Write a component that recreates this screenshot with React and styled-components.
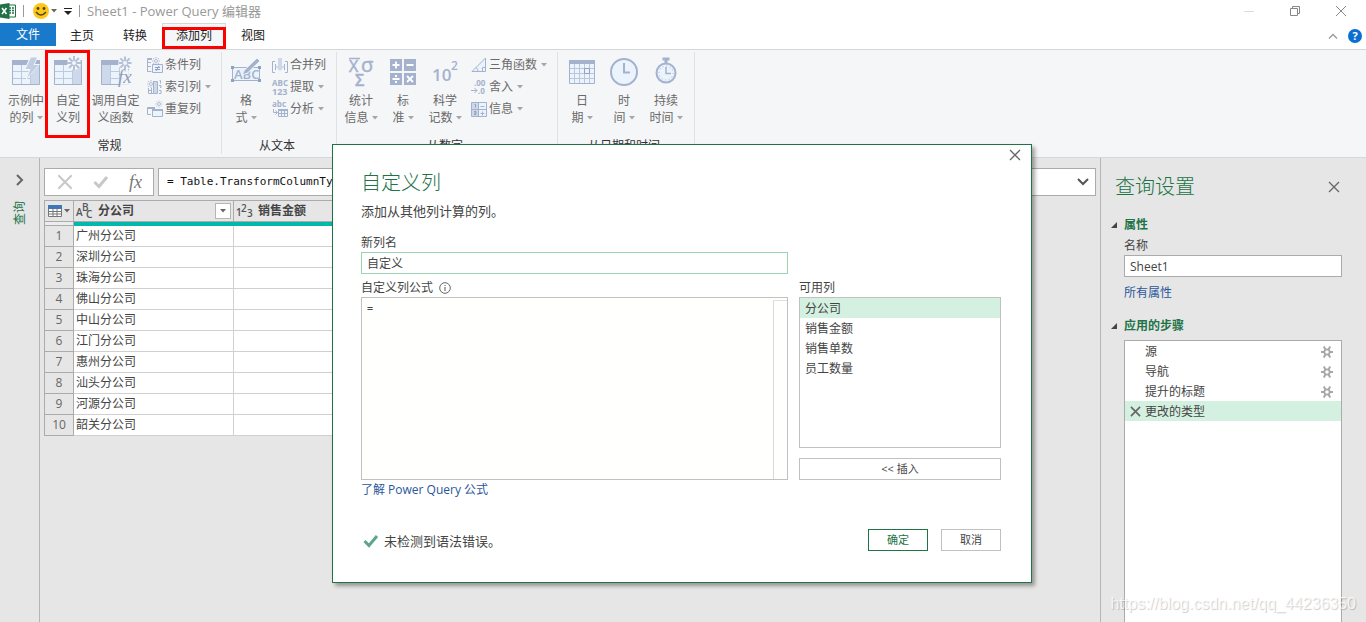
import React, { useState } from 'react';
import styled, { createGlobalStyle, css } from 'styled-components';


const columns = ['分公司', '销售金额', '销售单数', '员工数量'];
const shownColumns = columns.slice(0, 2);

const branches = [
    '广州分公司', '深圳分公司', '珠海分公司', '佛山分公司', '中山分公司',
    '江门分公司', '惠州分公司', '汕头分公司', '河源分公司', '韶关分公司',
];

const steps = [
    { name: '源', gear: true },
    { name: '导航', gear: true },
    { name: '提升的标题', gear: true },
    { name: '更改的类型', gear: false },
];

const GlobalStyle = createGlobalStyle`
    * {
        box-sizing: border-box;
    }
    body {
        margin: 0;
        background: #e6e6e6;
        color: #444;
        font-family: "Open Sans", "Noto Sans CJK SC", sans-serif;
        font-size: 12px;
        line-height: 16px;
    }
    button, input, textarea {
        font: inherit;
        color: inherit;
        margin: 0;
        padding: 0;
        border: none;
        border-radius: 0;
        background: none;
        outline: none;
    }
    h1, h2, h3, p, ul {
        margin: 0;
        padding: 0;
        list-style: none;
        font-weight: 400;
    }
    svg {
        display: block;
        flex-shrink: 0;
        overflow: visible;
    }
`

/* ---------- icons ---------- */

const ink = '#a4b2cd';
const mid = '#cdd9ea';
const pale = '#ebf3fd';

const Arrow = ({ color = '#a6a6a6' }) => (
    <svg width="6" height="4" viewBox="0 0 6 4"><path d="M0 0h6L3 3.5z" fill={color} /></svg>
);

const Cross = ({ size = 12, color = '#666', weight = 1.3 }) => (
    <svg width={size} height={size} viewBox="0 0 12 12">
        <path d="M1 1l10 10M11 1L1 11" stroke={color} strokeWidth={weight} fill="none" />
    </svg>
);

const Tick = ({ color, width = 16, height = 14 }) => (
    <svg width={width} height={height} viewBox="0 0 16 14">
        <path d="M1.5 7l4.500 4.500L14 2" stroke={color} strokeWidth="3" fill="none" />
    </svg>
);

const Chevron = ({ d, width, height, color = '#555', weight = 2 }) => (
    <svg width={width} height={height} viewBox={`0 0 ${width} ${height}`}>
        <path d={d} stroke={color} strokeWidth={weight} fill="none" />
    </svg>
);

const Burst = ({ x, y, r = 7 }) => (
    <g transform={`translate(${x} ${y})`} stroke="#b3c0d8" strokeWidth={r > 5 ? 2 : 1}>
        {[0, 45, 90, 135].map(a => <path key={a} d={`M${-r} 0H-2.500M2.500 0H${r}`} transform={`rotate(${a})`} />)}
        <circle r={r > 5 ? 2.5 : 1.5} fill="#f5f6f8" strokeWidth="1" />
    </g>
);

const Grid = ({ side = 'right' }) => (
    <g>
        <path d="M1.5 4.500h27v24h-27z" fill={pale} stroke={ink} />
        <path d={side === 'right' ? 'M20 5h8v23h-8z' : 'M2 5h8v23H2z'} fill={mid} />
        <path d={side === 'right' ? 'M2 15.500h18M2 22.500h18M10.500 9v19M19.500 9v19' : 'M10 15.500h18M10 22.500h18M10.500 9v19M19.500 9v19'} stroke="#bccae0" />
        <path d="M1 4h28v5H1z" fill={ink} />
    </g>
);

const ExampleIcon = () => (
    <svg width="30" height="30" viewBox="0 0 30 30">
        <Grid />
        <path d="M19 1h8l-3 7h5L14 25l4-11h-5z" fill="#f5f6f8" />
        <path d="M20 1.500h6l-3.500 7.500h5L16 22l3.500-9h-5z" fill="#c0cde2" />
    </svg>
);

const CustomIcon = () => (
    <svg width="30" height="30" viewBox="0 0 30 30">
        <Grid />
        <circle cx="21" cy="7" r="7" fill="#f5f6f8" />
        <Burst x={21} y={7} />
    </svg>
);

const InvokeIcon = () => (
    <svg width="32" height="30" viewBox="0 0 32 30">
        <Grid side="left" />
        <circle cx="25" cy="7" r="7" fill="#f5f6f8" />
        <Burst x={25} y={7} r={6.500} />
        <path d="M20 14h12v16H20z" fill="#f5f6f8" opacity="0.8" />
        <text x="18" y="27" fontFamily="Liberation Serif, serif" fontStyle="italic" fontSize="19" fill="#8f9dbb">fx</text>
    </svg>
);

const ConditionIcon = () => (
    <svg width="16" height="16" viewBox="0 0 16 16" fill="none" stroke={ink}>
        <path d="M5 1.500H.5v13h4M1 5.500h3M1 9.500h3" />
        <path d="M1 2h4" strokeWidth="2" />
        <Burst x={9} y={4} r={4} />
        <path d="M5.500 7.500h10v8h-10z" fill={pale} />
        <path d="M8 10.500h5M8 12.500h5M12 9l-3 5" stroke="#8fa1c1" />
    </svg>
);

const IndexIcon = () => (
    <svg width="16" height="16" viewBox="0 0 16 16" fill="none" stroke={ink}>
        <Burst x={4} y={5} r={4} />
        <path d="M1.500 9v5.500H6M4.500 9v5M1 11.500h4" />
        <path d="M6.500 2.500h4v12h-4z" fill={mid} />
        <path d="M12.500 1.500h1v3M12 6.500h2v2h-1M12 11.500h2v3h-2" />
    </svg>
);

const DuplicateIcon = () => (
    <svg width="16" height="16" viewBox="0 0 16 16" fill="none" stroke={ink}>
        <path d="M4 13.500H.5v-7H8" />
        <path d="M1 7h7" strokeWidth="2" />
        <path d="M5.500 8.500h10v7h-10z" fill={pale} />
        <path d="M5 9h11" strokeWidth="2" />
        <Burst x={12} y={3} r={3.500} />
    </svg>
);

const FormatIcon = () => (
    <svg width="32" height="30" viewBox="0 0 32 30">
        <path d="M2.500 11.500h27v13h-27z" fill={pale} stroke={ink} />
        <path d="M1 10h3v3H1zM28 10h3v3h-3zM1 23h3v3H1zM28 23h3v3h-3z" fill="#8fa1c1" />
        <text x="4" y="23" fontFamily="Open Sans, sans-serif" fontSize="13" fontWeight="600" fill={ink}>ABC</text>
        <path d="M12 19l2.500-5L27 2l3 3-12.500 12z" fill={ink} stroke="#f5f6f8" />
    </svg>
);

const MergeIcon = () => (
    <svg width="16" height="16" viewBox="0 0 16 16" fill="none" stroke={ink}>
        <path d="M3 4.500H.5v11H3M13 4.500h2.500v11H13M3.500 7v6M12.500 7v6" />
        <path d="M6 1h4v8h3l-5 5-5-5h3z" fill={mid} stroke="none" />
    </svg>
);

const ExtractIcon = () => (
    <svg width="16" height="16" viewBox="0 0 16 16" fontFamily="Open Sans, sans-serif" fontWeight="700" fill={ink}>
        <text x="0" y="7" fontSize="8">ABC</text>
        <text x="0" y="16" fontSize="9">123</text>
    </svg>
);

const ParseIcon = () => (
    <svg width="16" height="16" viewBox="0 0 16 16" fill="none" stroke={ink}>
        <text x="0" y="6" fontSize="8" fontWeight="700" fontFamily="Open Sans, sans-serif" fill={ink} stroke="none">abc</text>
        <path d="M1.500 8v3.500H5M3.500 9.500l2 2-2 2" />
        <path d="M6.500 8.500h9v7h-9z" fill={pale} />
        <path d="M6 9h10" strokeWidth="2" />
        <path d="M7 12.500h9M9.500 9v6M12.500 9v6" />
    </svg>
);

const StatsIcon = () => (
    <svg width="28" height="30" viewBox="0 0 28 30" fontFamily="Open Sans, sans-serif" fill={ink} stroke={ink} strokeWidth="0.5">
        <path d="M2 2.500h11" strokeWidth="1.500" />
        <text x="2" y="16" fontSize="16">X</text>
        <text x="14" y="16" fontSize="20">σ</text>
        <text x="8" y="30" fontSize="16" fontWeight="600">Σ</text>
    </svg>
);

const StandardIcon = () => (
    <svg width="28" height="30" viewBox="0 0 28 30">
        <path d="M1 3h12v12H1zM15 3h12v12H15zM1 17h12v12H1zM15 17h12v12H15z" fill={ink} />
        <path d="M3.500 9h7M7 5.500v7M17.500 9h7M3.500 23h7M18 20l6 6M24 20l-6 6" stroke="#fff" strokeWidth="1.800" />
        <path d="M6 19h2v2H6zM6 25h2v2H6z" fill="#fff" />
    </svg>
);

const ScienceIcon = () => (
    <svg width="28" height="30" viewBox="0 0 28 30" fontFamily="Open Sans, sans-serif" fontWeight="600" fill={ink}>
        <text x="1" y="25" fontSize="17">10</text>
        <text x="20" y="14" fontSize="12">2</text>
    </svg>
);

const TrigIcon = () => (
    <svg width="16" height="16" viewBox="0 0 16 16" fill="none" stroke={ink}>
        <path d="M1 14.500L14.500 1v13.500z" fill={pale} />
        <path d="M11.500 14v-3.500H14M5 10.500q2 1.500 2 4" />
    </svg>
);

const RoundIcon = () => (
    <svg width="16" height="16" viewBox="0 0 16 16" fill="none" stroke={ink}>
        <text x="3" y="7" fontSize="8" fontWeight="700" fontFamily="Open Sans, sans-serif" fill={ink} stroke="none">.00</text>
        <text x="7" y="15" fontSize="8" fontWeight="700" fontFamily="Open Sans, sans-serif" fill={ink} stroke="none">.0</text>
        <path d="M0 11.500h6M3.500 9l2.500 2.500L3.500 14" />
    </svg>
);

const InfoGridIcon = () => (
    <svg width="16" height="16" viewBox="0 0 16 16" fill="none" stroke={ink}>
        <path d="M.5 1.500h15v14H.5z" fill={pale} />
        <path d="M1 2h6v13H1z" fill={mid} stroke="none" />
        <path d="M7.500 2v13M1 8.500h14M9.500 5.500h4M9.500 12.500h4M11.500 10.500v4" />
        <path d="M3.500 3.500h1v3M3 10.500h2v3H3M3 12h2" stroke="#8fa1c1" />
    </svg>
);

const DateIcon = () => (
    <svg width="28" height="30" viewBox="0 0 28 30" fill="none">
        <path d="M1.500 4.500h25v23h-25z" fill={pale} stroke={ink} />
        <path d="M1 4h26v4H1z" fill={ink} />
        <path d="M2 12.500h24M2 17.500h24M2 22.500h24M6.500 8v19M11.500 8v19M16.500 8v19M21.500 8v19" stroke="#b9c6dc" />
        <path d="M16.500 12.500h5v5h-5z" stroke="#8fa1c1" fill={pale} />
    </svg>
);

const ClockIcon = () => (
    <svg width="30" height="30" viewBox="0 0 30 30" fill="none" stroke={ink}>
        <circle cx="15" cy="16" r="13" fill={pale} strokeWidth="2" />
        <path d="M15 7v9.500h6" strokeWidth="2" />
    </svg>
);

const DurationIcon = () => (
    <svg width="24" height="30" viewBox="0 0 24 30" fill="none" stroke={ink}>
        <path d="M8.500 3h7M12 3v4" strokeWidth="3" />
        <circle cx="12" cy="17" r="9.500" fill={pale} strokeWidth="2" />
        <circle cx="12" cy="17" r="7" strokeDasharray="1 2.660" />
        <path d="M12 11v6.500h5" strokeWidth="1.500" />
    </svg>
);

const ExcelLogo = () => (
    <svg width="16" height="16" viewBox="0 0 16 16">
        <path d="M8 2h7.500v12H8z" fill="#fff" stroke="#217346" />
        <path d="M9 5h2M12 5h2M9 7.500h2M12 7.500h2M9 10h2M12 10h2" stroke="#217346" strokeWidth="1.500" />
        <path d="M0 1.500L9.500 0v16L0 14.500z" fill="#217346" />
        <path d="M2 5l4.500 6M6.500 5L2 11" stroke="#fff" strokeWidth="1.600" />
    </svg>
);

const Smiley = () => (
    <svg width="16" height="16" viewBox="0 0 16 16">
        <circle cx="8" cy="8" r="8" fill="#fcc716" />
        <circle cx="5" cy="5.500" r="1.400" fill="#4c4028" />
        <circle cx="11" cy="5.500" r="1.400" fill="#4c4028" />
        <path d="M3 9q5 6 10 0" stroke="#4c4028" strokeWidth="1.400" fill="none" />
    </svg>
);

const TableIcon = () => (
    <svg width="14" height="12" viewBox="0 0 14 12" fill="none">
        <path d="M.5.5h13v11H.5z" fill="#fff" stroke="#777" />
        <path d="M0 0h14v4H0z" fill="#3f76b5" />
        <path d="M1 6.500h12M1 9h12M5 4v7M9 4v7" stroke="#777" />
    </svg>
);

const TypeText = () => (
    <svg width="18" height="18" viewBox="0 0 18 18" fontFamily="Open Sans, sans-serif" fontWeight="600" fontSize="10" fill="#555">
        <text x="0" y="14">A</text>
        <text x="6" y="9">B</text>
        <text x="10" y="16">C</text>
    </svg>
);

const TypeNumber = () => (
    <svg width="18" height="18" viewBox="0 0 18 18" fontFamily="Open Sans, sans-serif" fontWeight="600" fontSize="10" fill="#555">
        <text x="0" y="14">1</text>
        <text x="5" y="10">2</text>
        <text x="11" y="15">3</text>
    </svg>
);

const Gear = () => (
    <svg width="12" height="12" viewBox="0 0 12 12" stroke="#a8a8a8" fill="none">
        <circle cx="6" cy="6" r="2.700" strokeWidth="1.800" />
        <path d="M0 6h3M9 6h3M2.800.6l1.500 2.700M9.200.6L7.700 3.300M2.800 11.400l1.500-2.700M9.200 11.400L7.700 8.700" strokeWidth="2" />
    </svg>
);

const InfoIcon = () => (
    <svg width="12" height="12" viewBox="0 0 12 12" fill="none" stroke="#555">
        <circle cx="6" cy="6" r="5.300" strokeWidth="0.900" />
        <path d="M6 5v4M6 3v1" />
    </svg>
);

/* ---------- ribbon ---------- */

const ribbon = [
    {
        label: '常规',
        big: [
            { icon: <ExampleIcon />, lines: ['示例中', '的列'], arrow: true },
            { icon: <CustomIcon />, lines: ['自定', '义列'], marked: true },
            { icon: <InvokeIcon />, lines: ['调用自定', '义函数'], wide: true },
        ],
        small: [
            { icon: <ConditionIcon />, text: '条件列' },
            { icon: <IndexIcon />, text: '索引列', arrow: true },
            { icon: <DuplicateIcon />, text: '重复列' },
        ],
    },
    {
        label: '从文本',
        big: [{ icon: <FormatIcon />, lines: ['格', '式'], arrow: true }],
        small: [
            { icon: <MergeIcon />, text: '合并列' },
            { icon: <ExtractIcon />, text: '提取', arrow: true },
            { icon: <ParseIcon />, text: '分析', arrow: true },
        ],
    },
    {
        label: '从数字',
        big: [
            { icon: <StatsIcon />, lines: ['统计', '信息'], arrow: true },
            { icon: <StandardIcon />, lines: ['标', '准'], arrow: true },
            { icon: <ScienceIcon />, lines: ['科学', '记数'], arrow: true },
        ],
        small: [
            { icon: <TrigIcon />, text: '三角函数', arrow: true },
            { icon: <RoundIcon />, text: '舍入', arrow: true },
            { icon: <InfoGridIcon />, text: '信息', arrow: true },
        ],
    },
    {
        label: '从日期和时间',
        big: [
            { icon: <DateIcon />, lines: ['日', '期'], arrow: true },
            { icon: <ClockIcon />, lines: ['时', '间'], arrow: true },
            { icon: <DurationIcon />, lines: ['持续', '时间'], arrow: true },
        ],
        small: [],
    },
];

const RibbonBar = () => (
    <Ribbon>
        {ribbon.map(group => (
            <Group key={group.label}>
                <GroupTools>
                    {group.big.map(tool => (
                        <BigButton key={tool.lines.join('')} $wide={tool.wide} $marked={tool.marked}>
                            <BigIcon>{tool.icon}</BigIcon>
                            <span>{tool.lines[0]}</span>
                            <BigLine>{tool.lines[1]}{tool.arrow && <Arrow />}</BigLine>
                        </BigButton>
                    ))}
                    {group.small.length > 0 && (
                        <SmallColumn>
                            {group.small.map(tool => (
                                <SmallButton key={tool.text}>
                                    <SmallIcon>{tool.icon}</SmallIcon>
                                    {tool.text}
                                    {tool.arrow && <SmallArrow><Arrow /></SmallArrow>}
                                </SmallButton>
                            ))}
                        </SmallColumn>
                    )}
                </GroupTools>
                <GroupLabel>{group.label}</GroupLabel>
            </Group>
        ))}
    </Ribbon>
);

const DataTable = () => (
    <Table>
        <colgroup>
            <col width="30" />
            {shownColumns.map(name => <col key={name} width="160" />)}
        </colgroup>
        <thead>
            <tr>
                <HeadCell $first>
                    <HeadInner $center><TableIcon /><Arrow color="#666" /></HeadInner>
                </HeadCell>
                {shownColumns.map((name, i) => (
                    <HeadCell key={name}>
                        <HeadInner>
                            {i === 0 ? <TypeText /> : <TypeNumber />}
                            <HeadName>{name}</HeadName>
                            <FilterButton aria-label={name}><Arrow color="#666" /></FilterButton>
                        </HeadInner>
                    </HeadCell>
                ))}
            </tr>
            <tr>
                <QualityCell $first />
                {shownColumns.map(name => <QualityCell key={name} />)}
            </tr>
        </thead>
        <tbody>
            {branches.map((branch, i) => (
                <tr key={branch}>
                    <RowNumber>{i + 1}</RowNumber>
                    <Cell>{branch}</Cell>
                    <Cell />
                </tr>
            ))}
        </tbody>
    </Table>
);

const Settings = () => {
    const [current, setCurrent] = useState(3);
    return (
        <Panel>
            <PanelTop>
                <Title as="h2">查询设置</Title>
                <button aria-label="关闭"><Cross /></button>
            </PanelTop>
            <Section>
                <SectionTitle>属性</SectionTitle>
                <Label htmlFor="query-name">名称</Label>
                <TextBox id="query-name" defaultValue="Sheet1" />
                <PanelLink href="#props">所有属性</PanelLink>
            </Section>
            <Section $fill>
                <SectionTitle>应用的步骤</SectionTitle>
                <StepList>
                    {steps.map((step, i) => (
                        <li key={step.name}>
                            <Step $active={i === current} onClick={() => { setCurrent(i) }}>
                                <StepMark>{i === current && <Cross size={11} weight={1.8} />}</StepMark>
                                {step.name}
                                {step.gear && <StepGear><Gear /></StepGear>}
                            </Step>
                        </li>
                    ))}
                </StepList>
            </Section>
        </Panel>
    );
};

const CustomColumnDialog = () => {
    const [picked, setPicked] = useState(0);
    return (
        <Overlay>
            <Dialog role="dialog" aria-labelledby="dialog-title">
                <DialogClose aria-label="关闭"><Cross /></DialogClose>
                <Title id="dialog-title">自定义列</Title>
                <Intro>添加从其他列计算的列。</Intro>
                <DialogGrid>
                    <Field>
                        <Label htmlFor="column-name">新列名</Label>
                        <TextBox id="column-name" defaultValue="自定义" $green />
                    </Field>
                    <span />
                    <Field>
                        <Label htmlFor="formula">自定义列公式 <InfoIcon /></Label>
                        <FormulaBox>
                            <Formula id="formula" defaultValue="=" spellCheck="false" />
                            <ScrollTrack />
                        </FormulaBox>
                    </Field>
                    <Field>
                        <Label as="span" id="available">可用列</Label>
                        <ColumnList role="listbox" aria-labelledby="available">
                            {columns.map((name, i) => (
                                <ColumnItem
                                    key={name}
                                    role="option"
                                    aria-selected={i === picked}
                                    $active={i === picked}
                                    onClick={() => { setPicked(i) }}
                                >
                                    {name}
                                </ColumnItem>
                            ))}
                        </ColumnList>
                        <PushButton>&lt;&lt; 插入</PushButton>
                    </Field>
                </DialogGrid>
                <HelpLink href="#formula">了解 Power Query 公式</HelpLink>
                <DialogFooter>
                    <Status>
                        <Tick color="#5fa58a" />
                        未检测到语法错误。
                    </Status>
                    <PushButton $primary $fixed>确定</PushButton>
                    <PushButton $fixed>取消</PushButton>
                </DialogFooter>
            </Dialog>
        </Overlay>
    );
};

const App = () => {
    return (
        <Window>
            <GlobalStyle />
            <TitleBar>
                <ExcelLogo />
                <Divider />
                <QuickButton aria-label="反馈"><Smiley /><Arrow color="#666" /></QuickButton>
                <button aria-label="自定义快速访问工具栏">
                    <svg width="8" height="8" viewBox="0 0 8 8"><path d="M0 1.5h8" stroke="#222" /><path d="M0 4h8L4 8z" fill="#222" /></svg>
                </button>
                <Divider />
                <WindowTitle>Sheet1 - Power Query 编辑器</WindowTitle>
                <WindowButtons>
                    <button aria-label="最小化"><Chevron width={12} height={12} d="M1 6.5h10" color="#ddd" weight={1} /></button>
                    <button aria-label="还原"><Chevron width={12} height={12} d="M1.500 3.500h7v7h-7zM3.500 3.500v-2h7v7h-2" color="#888" weight={1} /></button>
                    <button aria-label="关闭"><Cross color="#888" weight={1} /></button>
                </WindowButtons>
            </TitleBar>
            <Tabs>
                <FileTab>文件</FileTab>
                <Tab>主页</Tab>
                <Tab>转换</Tab>
                <Tab $active>添加列</Tab>
                <Tab>视图</Tab>
                <TabsRight>
                    <button aria-label="折叠功能区"><Chevron width={10} height={6} d="M1 5.500l4-4 4 4" color="#999" weight={1.300} /></button>
                    <HelpButton aria-label="帮助">?</HelpButton>
                </TabsRight>
            </Tabs>
            <RibbonBar />
            <Body>
                <QueriesRail>
                    <button aria-label="展开"><Chevron width={8} height={12} d="M1 1l5 5-5 5" color="#666" /></button>
                    <RailLabel>查询</RailLabel>
                </QueriesRail>
                <Main>
                    <FormulaBar>
                        <BarButtons>
                            <button aria-label="取消"><Cross size={16} color="#c8c8c8" weight={1.600} /></button>
                            <button aria-label="确认"><Tick color="#c8c8c8" /></button>
                            <FxButton>fx</FxButton>
                        </BarButtons>
                        <BarBox>
                            <BarInput aria-label="公式" readOnly value="= Table.TransformColumnTypes" />
                            <button aria-label="展开公式"><Chevron width={12} height={8} d="M1 1l5 5 5-5" /></button>
                        </BarBox>
                    </FormulaBar>
                    <DataTable />
                </Main>
                <Settings />
            </Body>
            <CustomColumnDialog />
            <Watermark>https://blog.csdn.net/qq_44236350</Watermark>
        </Window>
    );
};

const Window = styled.div`
    position: relative;
    display: flex;
    flex-direction: column;
    height: 100vh;
    overflow: hidden;
`
const TitleBar = styled.header`
    display: flex;
    align-items: center;
    gap: 7px;
    height: 23px;
    padding-bottom: 2px;
    background: #fff;
`
const Divider = styled.span`
    width: 1px;
    height: 12px;
    background: #999;
`
const QuickButton = styled.button`
    display: flex;
    align-items: center;
    gap: 2px;
    padding-left: 2px;
`
const WindowTitle = styled.h1`
    color: #999;
    font-size: 13px;
`
const WindowButtons = styled.div`
    display: flex;
    gap: 34px;
    margin-left: auto;
    padding-right: 19px;
    button {
        display: block;
    }
`
const Tabs = styled.nav`
    display: flex;
    height: 27px;
    gap: 1px;
    background: #fff;
    border-bottom: 1px solid #d5d8db;
`
const Tab = styled.button`
    position: relative;
    padding: 0 13px;
    height: 26px;
    color: #222;
    border: 1px solid transparent;
    ${({ $active }) => $active && css`
        background: #f5f6f8;
        border-color: #d5d8db;
        &:after {
            content: "";
            position: absolute;
            inset: 3px -1px -1px;
            border: 3px solid #fe0000;
        }
    `}
`
const FileTab = styled.button`
    width: 56px;
    height: 23px;
    margin-right: -1px;
    color: #fff;
    background: #1979ca;
`
const TabsRight = styled.div`
    display: flex;
    align-items: center;
    gap: 10px;
    margin-left: auto;
    padding-right: 4px;
`
const HelpButton = styled.button`
    width: 14px;
    height: 14px;
    border-radius: 50%;
    background: #0a6fd0;
    color: #fff;
    font-size: 11px;
    font-weight: 700;
    line-height: 14px;
`
const Ribbon = styled.div`
    display: flex;
    flex-shrink: 0;
    height: 108px;
    padding: 2px 2px 3px;
    background: #f5f6f8;
    border-bottom: 1px solid #d5d8db;
`
const Group = styled.div`
    display: flex;
    flex-direction: column;
    justify-content: space-between;
    padding: 0 7px 0 3px;
    border-right: 1px solid #dfe1e4;
`
const GroupTools = styled.div`
    display: flex;
    color: #6a6a6a;
`
const GroupLabel = styled.div`
    text-align: center;
    color: #333;
`
const BigButton = styled.button`
    position: relative;
    display: flex;
    flex-direction: column;
    align-items: center;
    width: ${({ $wide }) => $wide ? '53px' : '42px'};
    padding-top: 4px;
    line-height: 17px;
    ${({ $marked }) => $marked && css`
        &:after {
            content: "";
            position: absolute;
            inset: -2px -1px -12px -2px;
            border: 3px solid #fe0000;
        }
    `}
`
const BigIcon = styled.span`
    height: 36px;
`
const BigLine = styled.span`
    display: flex;
    align-items: center;
    gap: 3px;
    white-space: nowrap;
`
const SmallColumn = styled.div`
    display: flex;
    flex-direction: column;
    align-items: flex-start;
    padding: 2px 3px 0 5px;
`
const SmallButton = styled.button`
    display: flex;
    align-items: center;
    height: 22px;
    white-space: nowrap;
`
const SmallIcon = styled.span`
    width: 18px;
`
const SmallArrow = styled.span`
    margin-left: 4px;
`
const Body = styled.div`
    display: flex;
    flex: 1;
    min-height: 0;
`
const QueriesRail = styled.aside`
    display: flex;
    flex-direction: column;
    align-items: center;
    gap: 15px;
    width: 40px;
    padding-top: 16px;
    border-right: 1px solid #b5b5b5;
`
const RailLabel = styled.span`
    color: #217346;
    writing-mode: vertical-rl;
    text-orientation: sideways;
    transform: rotate(180deg);
`
const Main = styled.main`
    flex: 1;
    min-width: 0;
    padding: 10px 4px;
    overflow: hidden;
`
const FormulaBar = styled.div`
    display: flex;
    gap: 4px;
    height: 28px;
    margin-bottom: 4px;
`
const BarButtons = styled.div`
    display: flex;
    align-items: center;
    justify-content: space-between;
    width: 110px;
    padding: 0 11px 0 12px;
    background: #fff;
    border: 1px solid #ababab;
`
const FxButton = styled.button`
    color: #777;
    font: italic 18px/22px "Liberation Serif", serif;
`
const BarBox = styled.div`
    display: flex;
    align-items: center;
    flex: 1;
    min-width: 0;
    padding: 0 6px 0 8px;
    background: #fff;
    border: 1px solid #ababab;
`
const BarInput = styled.input`
    flex: 1;
    min-width: 0;
    color: #111;
    font: 11px/16px "DejaVu Sans Mono", "Noto Sans CJK SC", monospace;
`
const Table = styled.table`
    width: 350px;
    table-layout: fixed;
    border-collapse: separate;
    border-spacing: 0;
    td, th {
        padding: 0;
    }
`
const HeadCell = styled.th`
    height: 22px;
    text-align: left;
    border: 1px solid #ababab;
    border-left-width: ${({ $first }) => $first ? '1px' : '0'};
`
const HeadInner = styled.div`
    display: flex;
    align-items: center;
    justify-content: ${({ $center }) => $center ? 'center' : 'flex-start'};
    gap: 2px;
    height: 20px;
    padding: 0 2px;
`
const HeadName = styled.span`
    flex: 1;
    padding-left: 2px;
`
const FilterButton = styled.button`
    display: flex;
    align-items: center;
    justify-content: center;
    width: 16px;
    height: 16px;
    background: #fff;
    border: 1px solid #b5b5b5;
`
const QualityCell = styled.td`
    height: 4px;
    line-height: 0;
    background: ${({ $first }) => $first ? '#ececec' : '#01b8aa'};
    ${({ $first }) => $first && css`
        border: 1px solid #ababab;
        border-top: none;
    `}
`
const RowNumber = styled.th`
    height: 21px;
    color: #666;
    font-weight: 400;
    text-align: center;
    border: 1px solid #ababab;
    border-top: none;
`
const Cell = styled.td`
    height: 21px;
    background: #fff;
    border-right: 1px solid #d0d0d0;
    border-bottom: 1px solid #d0d0d0;
    &&& {
        padding-left: 2px;
    }
`
const Panel = styled.aside`
    display: flex;
    flex-direction: column;
    width: 266px;
    padding: 14px 24px 0 10px;
    border-left: 1px solid #b5b5b5;
`
const PanelTop = styled.div`
    display: flex;
    align-items: center;
    justify-content: space-between;
    padding: 0 2px 0 4px;
    margin-bottom: 13px;
`
const Title = styled.h2`
    color: #217346;
    font-size: 20px;
    font-weight: 300;
    line-height: 30px;
`
const Section = styled.section`
    display: flex;
    flex-direction: column;
    padding-left: 13px;
    margin-bottom: 15px;
    ${({ $fill }) => $fill && css`
        flex: 1;
        margin-bottom: -1px;
    `}
`
const SectionTitle = styled.h3`
    display: flex;
    align-items: center;
    height: 20px;
    margin-left: -13px;
    margin-bottom: 2px;
    color: #217346;
    font-size: 12px;
    font-weight: 700;
    &:before {
        content: "";
        margin-right: 7px;
        border-left: 6px solid transparent;
        border-bottom: 6px solid #444;
    }
`
const Label = styled.label`
    display: flex;
    align-items: center;
    gap: 6px;
    height: 18px;
`
const TextBox = styled.input`
    height: 22px;
    padding: 0 5px;
    background: #fff;
    border: 1px solid ${({ $green }) => $green ? '#9bd3b4' : '#ababab'};
`
const PanelLink = styled.a`
    margin-top: 8px;
    color: #2b579a;
    text-decoration: none;
`
const StepList = styled.ul`
    flex: 1;
    margin-top: 2px;
    background: #fff;
    border: 1px solid #ababab;
`
const Step = styled.button`
    display: flex;
    align-items: center;
    width: 100%;
    height: 20px;
    padding: 1px 8px 0 5px;
    background: ${({ $active }) => $active ? '#d3f0e0' : '#fff'};
`
const StepMark = styled.span`
    width: 15px;
`
const StepGear = styled.span`
    margin-left: auto;
`
const Overlay = styled.div`
    position: absolute;
    inset: 0;
    display: flex;
    align-items: flex-start;
    justify-content: center;
    padding: 144px 12px 0 10px;
`
const Dialog = styled.div`
    position: relative;
    width: 700px;
    padding: 23px 30px 31px 28px;
    background: #fff;
    border: 1px solid #217346;
    box-shadow: 3px 3px 4px rgba(0, 0, 0, 0.35);
`
const DialogClose = styled.button`
    position: absolute;
    top: 4px;
    right: 10px;
`
const Intro = styled.p`
    margin: 3px 0 13px;
    font-size: 13px;
    line-height: 20px;
`
const DialogGrid = styled.div`
    display: grid;
    grid-template-columns: 1fr 202px;
    column-gap: 11px;
    row-gap: 5px;
`
const Field = styled.div`
    display: flex;
    flex-direction: column;
`
const FormulaBox = styled.div`
    display: flex;
    height: 183px;
    border: 1px solid #c1c1c1;
    background: #fffffd;
`
const Formula = styled.textarea`
    flex: 1;
    padding: 5px;
    font: 10px/12px "DejaVu Sans Mono", monospace;
    resize: none;
    overflow: hidden;
`
const ScrollTrack = styled.div`
    width: 14px;
    margin-top: 2px;
    border-top: 1px solid #e0e0e0;
    border-left: 1px solid #d9d9d9;
`
const ColumnList = styled.ul`
    height: 151px;
    margin-bottom: 10px;
    border: 1px solid #c1c1c1;
`
const ColumnItem = styled.li`
    padding: 2px 5px 0;
    line-height: 18px;
    background: ${({ $active }) => $active ? '#d3f0e0' : '#fff'};
`
const PushButton = styled.button`
    width: ${({ $fixed }) => $fixed ? '60px' : '100%'};
    height: 22px;
    font-size: 11px;
    color: ${({ $primary }) => $primary ? '#217346' : '#444'};
    border: 1px solid ${({ $primary }) => $primary ? '#217346' : '#c1c1c1'};
`
const HelpLink = styled.a`
    display: block;
    margin-top: 2px;
    color: #2b579a;
    text-decoration: none;
`
const DialogFooter = styled.div`
    display: flex;
    align-items: center;
    gap: 13px;
    margin-top: 31px;
`
const Status = styled.div`
    display: flex;
    align-items: center;
    gap: 5px;
    flex: 1;
    padding: 2px 0 0 2px;
    font-size: 13px;
`
const Watermark = styled.div`
    position: absolute;
    right: 10px;
    bottom: 9px;
    color: rgba(255, 255, 255, 0.8);
    font: 16px/18px "Liberation Sans", sans-serif;
    text-shadow: 1px 1px 1px rgba(0, 0, 0, 0.2);
`

export default App;
